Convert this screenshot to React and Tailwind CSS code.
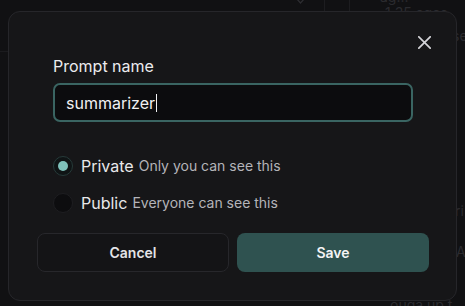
import React from "react";

export default function App() {
  return (
    <div className="relative w-[465px] h-[306px] overflow-hidden bg-[#111113] font-['Inter',sans-serif] pl-[8px] pt-[11px]">
      {/* faint backdrop content */}
      <div className="absolute inset-0 pointer-events-none">
        <div className="absolute left-[324px] top-0 h-[11px] w-px bg-[#1d1d20]" />
        <div className="absolute left-[349px] top-0 h-[11px] w-px bg-[#1d1d20]" />
        <svg className="absolute left-[295px] top-[-5px]" width="11" height="10" viewBox="0 0 11 10">
          <path d="M1 3 L5.5 8 L10 3" fill="none" stroke="#2e2e32" strokeWidth="1.2" />
        </svg>
        <div className="absolute left-0 top-[51px] h-px w-[8px] bg-[#1b1b1e]" />
        <div className="absolute left-[380px] top-[-12px] text-[14px] leading-[18px] text-[#2b2b2f]">ag...</div>
        <div className="absolute left-[385px] top-[4px] text-[14px] leading-[18px] text-[#2b2b2f]">1 35 ages</div>
        <div className="absolute left-[452px] top-[27px] text-[14px] leading-[18px] text-[#2b2b2f]">se</div>
        <div className="absolute left-[455px] top-[202px] text-[14px] leading-[18px] text-[#2b2b2f]">ri</div>
        <div className="absolute left-[456px] top-[243px] text-[14px] leading-[18px] text-[#2b2b2f]">A</div>
        <div className="absolute left-[390px] top-[296px] text-[14px] leading-[18px] text-[#2b2b2f]">ouga up t</div>
      </div>

      <div className="relative w-[449px] h-[290px] rounded-[12px] border border-[#26262a] bg-[#161618] pt-[44px] pb-[28px] pl-[28px] pr-[27px]">
        <button className="absolute right-[25px] top-[24px] w-[13px] h-[13px]">
          <svg width="13" height="13" viewBox="0 0 13 13">
            <path d="M0.8 0.8 L12.2 12.2 M12.2 0.8 L0.8 12.2" stroke="#d4d4d8" strokeWidth="1.7" strokeLinecap="square" />
          </svg>
        </button>

        <div className="px-[16px]">
          <div className="text-[16px] leading-[20px] font-normal text-[#ececee]">Prompt name</div>
          <div className="mt-[7px] h-[39px] rounded-[7px] border-2 border-[#3a6562] bg-[#0c0c0e] flex items-center pl-[11px]">
            <span className="text-[16px] leading-[20px] text-[#f1f1f3]">summarizer</span>
            <span className="ml-px w-px h-[18px] bg-[#f1f1f3]" />
          </div>

          <div className="mt-[34px] flex flex-col gap-[17px]">
            <div className="flex items-center h-[20px]">
              <div className="w-[20px] h-[20px] rounded-full border border-[#263a39] bg-[#0f1415] flex items-center justify-center">
                <div className="w-[10px] h-[10px] rounded-full bg-[#7fc2bb]" />
              </div>
              <span className="ml-[8px] text-[16px] leading-[20px] text-[#e8e8ea]">Private</span>
              <span className="ml-[5px] text-[14px] leading-[20px] text-[#b4b4b9]">Only you can see this</span>
            </div>
            <div className="flex items-center h-[20px]">
              <div className="w-[20px] h-[20px] rounded-full border border-[#1e1e21] bg-[#0d0d0f]" />
              <span className="ml-[8px] text-[16px] leading-[20px] text-[#e8e8ea]">Public</span>
              <span className="ml-[5px] text-[14px] leading-[20px] text-[#b4b4b9]">Everyone can see this</span>
            </div>
          </div>
        </div>

        <div className="mt-[20px] grid grid-cols-2 gap-[8px]">
          <button className="h-[39px] rounded-[8px] border border-[#27272b] bg-[#141416] text-[14px] font-semibold text-[#e4e4e7]">
            Cancel
          </button>
          <button className="h-[39px] rounded-[8px] bg-[#2f5250] text-[14px] font-semibold text-[#f4f4f5]">
            Save
          </button>
        </div>
      </div>
    </div>
  );
}
